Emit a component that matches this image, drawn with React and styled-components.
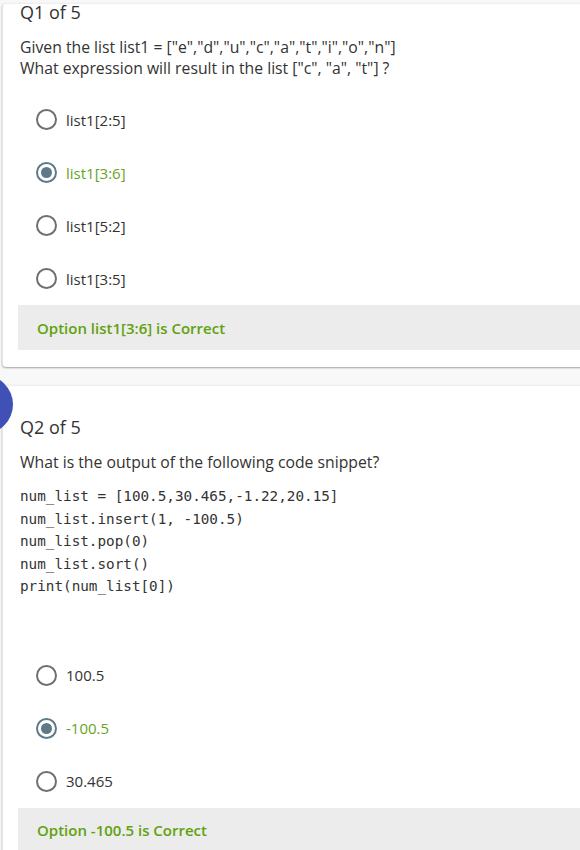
import React from 'react'
import styled, { createGlobalStyle } from 'styled-components'

const GlobalStyle = createGlobalStyle`
  html, body {
    margin: 0;
    padding: 0;
    background: #f8f8f8;
    overflow: hidden;
  }
  body {
    font-family: "Open Sans", "Noto Sans", sans-serif;
    color: #333333;
  }
`

const questions = [
  {
    id: 1,
    top: 0,
    title: 'Q1 of 5',
    text: ['Given the list list1 = ["e","d","u","c","a","t","i","o","n"]', 'What expression will result in the list ["c", "a", "t"] ?'],
    options: ['list1[2:5]', 'list1[3:6]', 'list1[5:2]', 'list1[3:5]'],
    selected: 1,
    feedback: 'Option list1[3:6] is Correct',
  },
  {
    id: 2,
    top: 33,
    title: 'Q2 of 5',
    text: ['What is the output of the following code snippet?'],
    code: [
      'num_list = [100.5,30.465,-1.22,20.15]',
      'num_list.insert(1, -100.5)',
      'num_list.pop(0)',
      'num_list.sort()',
      'print(num_list[0])',
    ],
    options: ['100.5', '-100.5', '30.465'],
    selected: 1,
    feedback: 'Option -100.5 is Correct',
  },
]

const Question = ({ q }) => (
  <Card $top={q.top}>
    {q.id === 2 && <Badge />}
    <Title>{q.title}</Title>
    <Text>
      {q.text.map((line) => (
        <div key={line}>{line}</div>
      ))}
    </Text>
    {q.code && (
      <Code>
        {q.code.map((line) => (
          <div key={line}>{line}</div>
        ))}
      </Code>
    )}
    <Options $gap={q.code ? 51 : 14}>
      {q.options.map((opt, i) => (
        <Option key={opt}>
          <Radio $checked={i === q.selected} />
          <Label $checked={i === q.selected}>{opt}</Label>
        </Option>
      ))}
    </Options>
    <Feedback>{q.feedback}</Feedback>
  </Card>
)

const App = () => (
  <>
    <GlobalStyle />
    <Page>
      {questions.map((q) => (
        <Question key={q.id} q={q} />
      ))}
    </Page>
  </>
)

export default App

const Page = styled.div`
  padding-top: 3px;
  display: flex;
  flex-direction: column;
  gap: 18px;
`

const Card = styled.section`
  position: relative;
  margin-left: 2px;
  margin-right: -10px;
  background: #ffffff;
  border-left: 1px solid #e4e4e4;
  border-top: 1px solid #efefef;
  border-radius: 4px;
  box-shadow: 0 1px 2px rgba(0, 0, 0, 0.35);
  padding: ${(p) => p.$top}px 0 17px 15px;
`

const Badge = styled.div`
  position: absolute;
  left: -49px;
  top: -11px;
  width: 59px;
  height: 59px;
  border-radius: 50%;
  background: #3f51b5;
`

const Title = styled.h2`
  margin: -1px 0 0;
  padding-left: 2px;
  font-size: 18px;
  line-height: 18px;
  font-weight: 400;
  color: #333333;
`

const Text = styled.div`
  margin-top: 16px;
  padding-left: 2px;
  font-size: 15.75px;
  line-height: 21px;
  color: #333333;
`

const Code = styled.pre`
  margin: 12px 0 0;
  padding-left: 2px;
  font-family: "DejaVu Sans Mono", "Liberation Mono", monospace;
  font-size: 14.3px;
  line-height: 22.5px;
  color: #333333;
`

const Options = styled.div`
  margin-top: ${(p) => p.$gap}px;
  display: flex;
  flex-direction: column;
`

const Option = styled.label`
  height: 53px;
  display: flex;
  align-items: center;
  gap: 9px;
  padding-left: 18px;
`

const Radio = styled.span`
  box-sizing: border-box;
  width: 21px;
  height: 21px;
  border-radius: 50%;
  border: 2px solid ${(p) => (p.$checked ? '#5e7a89' : '#6f6f6f')};
  display: flex;
  align-items: center;
  justify-content: center;

  &::after {
    content: '';
    width: 11px;
    height: 11px;
    border-radius: 50%;
    background: #5e7a89;
    display: ${(p) => (p.$checked ? 'block' : 'none')};
  }
`

const Label = styled.span`
  font-size: 15px;
  color: ${(p) => (p.$checked ? '#68a41c' : '#333333')};
`

const Feedback = styled.div`
  height: 45px;
  display: flex;
  align-items: center;
  padding-left: 19px;
  background: #ececec;
  font-size: 15px;
  font-weight: 600;
  color: #5fa20e;
`
